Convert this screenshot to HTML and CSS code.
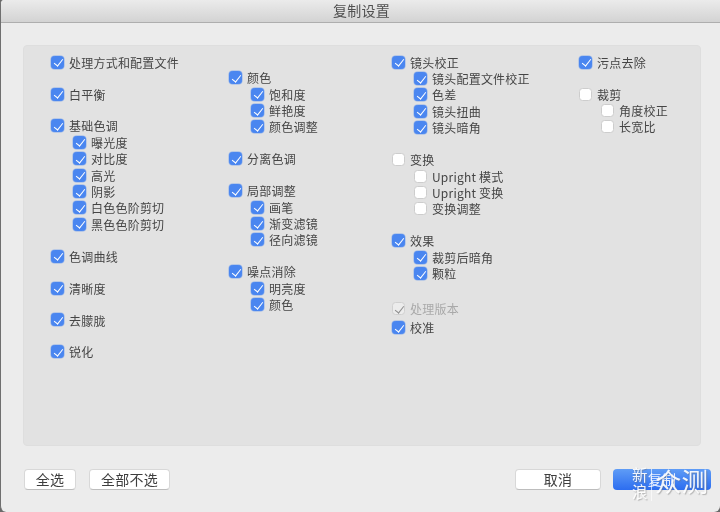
FILE: index.html
```html
<!DOCTYPE html>
<html lang="zh">
<head>
<meta charset="utf-8">
<title>复制设置</title>
<link rel="stylesheet" href="styles.css">
</head>
<body>
<div class="window">
  <header class="titlebar">复制设置</header>
  <main class="panel">
    <section class="col col-1">
      <div class="group"><label class="row"><i class="cb on"></i>处理方式和配置文件</label></div>
      <div class="group"><label class="row"><i class="cb on"></i>白平衡</label></div>
      <div class="group"><label class="row"><i class="cb on"></i>基础色调</label>
        <label class="row sub"><i class="cb on"></i>曝光度</label>
        <label class="row sub"><i class="cb on"></i>对比度</label>
        <label class="row sub"><i class="cb on"></i>高光</label>
        <label class="row sub"><i class="cb on"></i>阴影</label>
        <label class="row sub"><i class="cb on"></i>白色色阶剪切</label>
        <label class="row sub"><i class="cb on"></i>黑色色阶剪切</label></div>
      <div class="group"><label class="row"><i class="cb on"></i>色调曲线</label></div>
      <div class="group"><label class="row"><i class="cb on"></i>清晰度</label></div>
      <div class="group"><label class="row"><i class="cb on"></i>去朦胧</label></div>
      <div class="group"><label class="row"><i class="cb on"></i>锐化</label></div>
    </section>
    <section class="col col-2">
      <div class="group"><label class="row"><i class="cb on"></i>颜色</label>
        <label class="row sub"><i class="cb on"></i>饱和度</label>
        <label class="row sub"><i class="cb on"></i>鲜艳度</label>
        <label class="row sub"><i class="cb on"></i>颜色调整</label></div>
      <div class="group"><label class="row"><i class="cb on"></i>分离色调</label></div>
      <div class="group"><label class="row"><i class="cb on"></i>局部调整</label>
        <label class="row sub"><i class="cb on"></i>画笔</label>
        <label class="row sub"><i class="cb on"></i>渐变滤镜</label>
        <label class="row sub"><i class="cb on"></i>径向滤镜</label></div>
      <div class="group"><label class="row"><i class="cb on"></i>噪点消除</label>
        <label class="row sub"><i class="cb on"></i>明亮度</label>
        <label class="row sub"><i class="cb on"></i>颜色</label></div>
    </section>
    <section class="col col-3">
      <div class="group"><label class="row"><i class="cb on"></i>镜头校正</label>
        <label class="row sub"><i class="cb on"></i>镜头配置文件校正</label>
        <label class="row sub"><i class="cb on"></i>色差</label>
        <label class="row sub"><i class="cb on"></i>镜头扭曲</label>
        <label class="row sub"><i class="cb on"></i>镜头暗角</label></div>
      <div class="group"><label class="row"><i class="cb"></i>变换</label>
        <label class="row sub"><i class="cb"></i>Upright 模式</label>
        <label class="row sub"><i class="cb"></i>Upright 变换</label>
        <label class="row sub"><i class="cb"></i>变换调整</label></div>
      <div class="group"><label class="row"><i class="cb on"></i>效果</label>
        <label class="row sub"><i class="cb on"></i>裁剪后暗角</label>
        <label class="row sub"><i class="cb on"></i>颗粒</label></div>
      <div class="group version"><label class="row off"><i class="cb dis"></i>处理版本</label></div>
      <div class="group calib"><label class="row"><i class="cb on"></i>校准</label></div>
    </section>
    <section class="col col-4">
      <div class="group"><label class="row"><i class="cb on"></i>污点去除</label></div>
      <div class="group"><label class="row"><i class="cb"></i>裁剪</label>
        <label class="row sub"><i class="cb"></i>角度校正</label>
        <label class="row sub"><i class="cb"></i>长宽比</label></div>
    </section>
  </main>
  <footer class="actions">
    <button class="btn w-all">全选</button>
    <button class="btn w-none">全部不选</button>
    <span class="spacer"></span>
    <button class="btn w-cancel">取消</button>
    <button class="btn primary">复制</button>
  </footer>
  <div class="watermark">
    <span class="wm-small">新<br>浪</span>
    <span class="wm-line"></span>
    <span class="wm-big">众测</span>
  </div>
</div>
</body>
</html>
```
FILE: styles.css
```css
* { box-sizing: border-box; }
html, body { margin: 0; width: 720px; height: 512px; overflow: hidden; background: #6a6a6a; }
body { font-family: "Noto Sans CJK SC", "Liberation Sans", sans-serif; }
.window {
  position: relative; width: 720px; height: 512px; background: #ececec;
  border-left: 1px solid #6f6f6f; border-radius: 4px 0 6px 6px; overflow: hidden;
  display: flex; flex-direction: column; filter: blur(0.4px);
}
.titlebar {
  height: 23px; flex: none; text-align: center; font-size: 14px; line-height: 21px; color: #505050;
  background: linear-gradient(#ebebeb, #d3d3d3); border-bottom: 1px solid #aeaeae;
  letter-spacing: 0.2px; padding-left: 2px;
}
.panel {
  margin: 22px 19px 0 22px; height: 401px; flex: none; background: #e2e2e2;
  border-radius: 4px; border: 1px solid #dedede; display: flex; padding-top: 8px;
}
.col { flex: none; }
.col-1 { width: 178px; padding-left: 27px; }
.col-2 { width: 163px; padding-left: 27px; padding-top: 15.5px; }
.col-3 { width: 187px; padding-left: 27px; }
.col-4 { padding-left: 27px; }
.group { margin-bottom: 15.5px; }
.row { display: flex; align-items: center; height: 16.4px; font-size: 12px; letter-spacing: 0.22px; color: #454545; white-space: nowrap; }
.sub { padding-left: 22px; }
.cb {
  flex: none; width: 13px; height: 13px; margin-right: 5px; border-radius: 3.5px;
  background: #fff; border: 1px solid #cdcdcd; position: relative;
}
.cb.on { background: #4a86f0; border-color: #4a86f0; box-shadow: 0 0 0 0.5px rgba(74,134,240,.55); }
.cb.on::after, .cb.dis::after {
  content: ""; position: absolute; left: 3.5px; top: 0.6px; width: 3.8px; height: 8px;
  border: solid #fff; border-width: 0 1.6px 1.6px 0; transform: rotate(38deg);
}
.cb.dis { background: #ececec; border-color: #d0d0d0; }
.cb.dis::after { border-color: #8e8e8e; }
.off { color: #a9a9a9; }
.version { margin: 18.6px 0 0; }
.calib { margin-top: 2.6px; }
.actions { display: flex; align-items: center; padding: 0 9px 0 23px; margin-top: 23px; gap: 13px; }
.btn {
  height: 21px; font: inherit; font-size: 14px; line-height: 19px; color: #3e3e3e; padding: 0;
  background: #fff; border: 1px solid #d8d8d8; border-bottom-color: #bdbdbd; border-radius: 4px; letter-spacing: 0.2px;
}
.w-all { width: 52px; }
.w-none { width: 81px; }
.w-cancel { width: 86px; }
.primary { width: 98px; margin-left: -1px; color: #e9f0ff; border: none; background: linear-gradient(#5f9cf6, #2c6df0); }
.spacer { flex: 1; }
.watermark {
  position: absolute; left: 631px; top: 466px; display: flex; align-items: flex-start;
  color: rgba(255,255,255,.92); text-shadow: 1px 1px 1px rgba(110,110,110,.45);
}
.wm-small { font-size: 15.5px; line-height: 16.5px; width: 17px; }
.wm-line { width: 1px; height: 32px; background: rgba(255,255,255,.65); margin: 3px 0 0 2px; }
.wm-big { font-size: 26.5px; line-height: 30px; margin-left: 3px; letter-spacing: 0; white-space: nowrap; }
```
